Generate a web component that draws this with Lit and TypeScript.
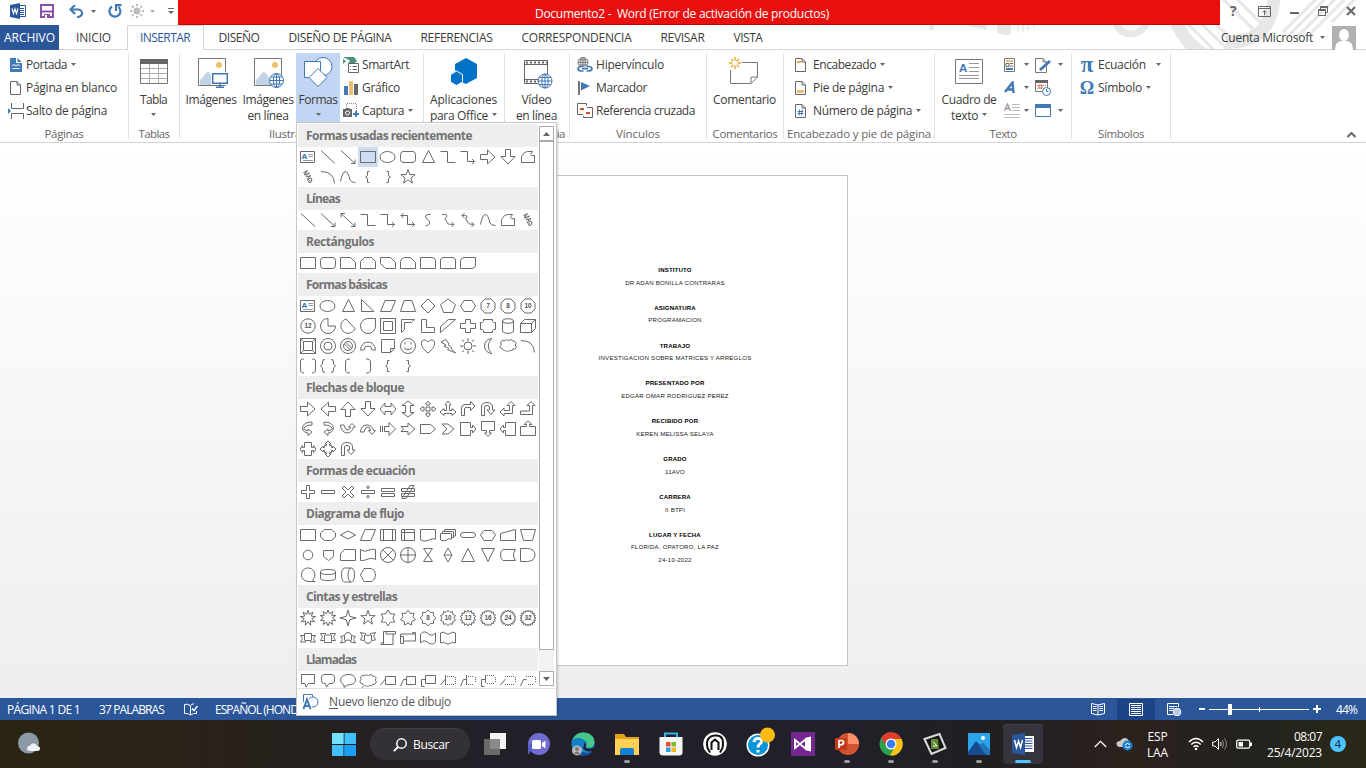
import { LitElement, html, css, svg, nothing } from "lit";
import { customElement } from "lit/decorators.js";

const FONT = '"Open Sans", "Noto Sans", sans-serif';
const ctx = document.createElement("canvas").getContext("2d")!;

/** A label whose tracking is computed so that it fills the given width. */
const tx = (text: string, width: number, size = 12, weight = 400) => {
  ctx.font = `${weight} ${size}px ${FONT}`;
  const gap = (width - ctx.measureText(text).width) / text.length;
  return html`<span class="tx" style="width:${width}px;font-size:${size}px;font-weight:${weight};letter-spacing:${gap.toFixed(3)}px">${text}</span>`;
};

const icon = (w: number, h: number, body: unknown) =>
  html`<svg class="ic" width=${w} height=${h} viewBox="0 0 ${w} ${h}" fill="none">${body}</svg>`;

const arrow = html`<svg class="arrow" width="5" height="3" viewBox="0 0 5 3"><path d="M0 0H5L2.5 3Z" fill="#666" /></svg>`;

const star = (n: number, R: number, r: number, cx = 10, cy = 10) => {
  let d = "";
  for (let i = 0; i < n * 2; i++) {
    const a = -Math.PI / 2 + (i * Math.PI) / n;
    const q = i % 2 ? r : R;
    d += (i ? "L" : "M") + (cx + q * Math.cos(a)).toFixed(2) + " " + (cy + q * Math.sin(a)).toFixed(2);
  }
  return d + "Z";
};
const circle = (r: number, cx = 10, cy = 10, ry = r) =>
  `M${cx - r} ${cy}a${r} ${ry} 0 1 0 ${2 * r} 0a${r} ${ry} 0 1 0 ${-2 * r} 0Z`;
const OCT = "M7 3H13L17 7V13L13 17H7L3 13V7Z";
const CLOUD = "M4.500 12.500A2 2 0 0 1 3.500 8.500A2.300 2.300 0 0 1 6.500 5A2.300 2.300 0 0 1 10.500 5A2.400 2.400 0 0 1 15 5.500A2 2 0 0 1 17 9A2.200 2.200 0 0 1 15 13A2.500 2.500 0 0 1 11.500 14.500A2.600 2.600 0 0 1 7.500 14.500A2.100 2.100 0 0 1 4.500 12.500Z";

type Shape = string | [string, string];
const S: Record<string, Shape> = {
  text: ["M2.500 4.500H16.500V15.500H2.500Z", "A"],
  line: "M3 3.500L17 16.500",
  lineA: "M3 3.500L17 16.500M17 12.500V16.500H13",
  lineAA: "M3 3.500L17 16.500M17 12.500V16.500H13M3 7.500V3.500H7",
  rect: "M2.500 4.500H17.500V15.500H2.500Z",
  ell: circle(7.5, 9.5, 10, 5.5),
  rrect: "M5 4.500H15Q17.500 5 17.500 7.500V12.500Q17.500 15 15 15.500H5Q2.500 15 2.500 12.500V7.500Q2.500 5 5 4.500Z",
  tri: "M10.500 3.500L16.500 15.500H4.500Z",
  elb: "M2.500 4.500H9.500V15.500H17.500",
  elbA: "M2.500 4.500H9.500V14.500H16.500M14 12L16.500 14.500L14 17",
  elbAA: "M3 5.500H9.500V14.500H16.500M14 12L16.500 14.500L14 17M5.500 3L3 5.500L5.500 8",
  aR: "M2.500 7.500H9.500V3L17 10L9.500 17V12.500H2.500Z",
  aL: "M17.500 7.500H10.500V3L3 10L10.500 17V12.500H17.500Z",
  aU: "M7.500 17.500V10.500H3L10 3L17 10.500H12.500V17.500Z",
  aD: "M7.500 2.500V9.500H3L10 17L17 9.500H12.500V2.500Z",
  free: "M3.500 15.500V9.500L6.500 5.500L9.500 4.500H14.500L12.500 7.500Q13 9.500 16.500 8.500V15.500Z",
  scrib: "M8 6Q6 7 5.500 5.500L9.500 3.500L6.500 8L11.500 6Q7 9.500 8.500 10L13 8.500Q8.500 11.500 9.500 13Q12 9.500 14 12Q13.500 16.500 11 15.500Q9.500 13.500 12 13",
  arc: "M3 4.500Q16 4.500 16.500 16.500",
  curve: "M2.500 14.500Q4.500 4.500 7.500 4.500Q10 4.500 12 13Q13 15.500 17.500 15.500",
  brL: "M11.500 4.500H9.500V8.500L7.500 10L9.500 11.500V15.500H11.500",
  brR: "M8.500 4.500H10.500V8.500L12.500 10L10.500 11.500V15.500H8.500",
  star5: star(5, 7.6, 3),
  cv: "M12.500 4.500H10Q7 5 7.500 7Q8 8.500 10 9.500Q12.500 11.500 11.500 14Q11 15.500 7.500 15.500",
  cvA: "M4 4.500Q9.500 4 9 6.500Q6.500 8 7 9.500Q9 10.500 9 12.500Q9 14.500 15.500 14.500M13.500 12L16 14.500L13.500 17",
  cvAA: "M4 5.500Q9.500 5 9 7Q7 8.500 8 10Q10 10.500 10 12.500Q10 14.500 15.500 14.500M13.500 12L16 14.500L13.500 17M6.500 3L4 5.500L6.500 8",
  snip1: "M2.500 4.500H12.500L17.500 9.500V15.500H2.500Z",
  snip2: "M6.500 4.500H13.500L17.500 8.500V15.500H2.500V8.500Z",
  snipD: "M2.500 4.500H12.500L17.500 9.500V15.500H7.500L2.500 10.500Z",
  snipR: "M6.500 4.500H12.500L17.500 9.500V15.500H2.500V8.500Q3 5 6.500 4.500Z",
  rnd1: "M2.500 4.500H14.500Q17 5 17.500 7.500V15.500H2.500Z",
  rnd2: "M5 4.500H15Q17.500 5 17.500 7V15.500H2.500V7Q2.500 5 5 4.500Z",
  rndD: "M6 4.500H17.500V12.500Q17 15 14 15.500H2.500V8Q3 5 6 4.500Z",
  rtri: "M3.500 3.500V15.500H16Z",
  para: "M7 4.500H17.500L13 15.500H2.500Z",
  trap: "M6 4.500H14L17.500 15.500H2.500Z",
  dia: "M10 3L17 10L10 17L3 10Z",
  pent: "M10 3L17.500 8.500L14.500 16.500H5.500L2.500 8.500Z",
  hex: "M6 4.500H14L17.500 10L14 15.500H6L2.500 10Z",
  o7: [OCT, "7"], o8: [OCT, "8"], o10: [OCT, "10"], o12: [circle(7.2), "12"],
  pie: "M10 2.500A7.500 7.500 0 1 0 17.500 10H10Z",
  chord: "M8 3L17 12.500A7.300 7.300 0 1 1 8 3Z",
  tear: "M10 2.500H17.500V10A7.500 7.500 0 1 1 10 2.500Z",
  frame: "M2.500 2.500H17.500V17.500H2.500ZM5.500 5.500H14.500V14.500H5.500Z",
  half: "M3.500 3.500H16.500L13.500 6.500H6.500V13.500L3.500 16.500Z",
  ell2: "M3.500 3.500H8.500V11.500H16.500V16.500H3.500Z",
  diag: "M2.500 10.500L10.500 3.500H17.500L2.500 16.500Z",
  plus: "M7.500 3.500H12.500V7.500H17.500V12.500H12.500V16.500H7.500V12.500H2.500V7.500H7.500Z",
  plaq: "M5.500 3.500H14.500V5.500L15.500 6.500H17.500V13.500H15.500L14.500 14.500V16.500H5.500V14.500L4.500 13.500H2.500V6.500H4.500L5.500 5.500Z",
  can: "M4.500 5C4.500 2 15.500 2 15.500 5V15C15.500 18 4.500 18 4.500 15ZM4.500 5C4.500 8 15.500 8 15.500 5",
  cube: "M2.500 7.500H13.500V16.500H2.500ZM2.500 7.500L6.500 3.500H17.500V12.500L13.500 16.500M13.500 7.500L17.500 3.500",
  bevel: "M2.500 2.500H17.500V17.500H2.500ZM5.500 5.500H14.500V14.500H5.500ZM2.500 2.500L5.500 5.500M17.500 2.500L14.500 5.500M2.500 17.500L5.500 14.500M17.500 17.500L14.500 14.500",
  donut: circle(7.5) + circle(4),
  no: circle(7.5) + circle(4.5) + "M6.500 8L12.500 14M8 6.500L14 12.500",
  barc: "M2.500 14A7.500 8 0 0 1 17.500 14H14A4 4 0 0 0 6 14Z",
  fold: "M3.500 3.500H16.500V12.500L12.500 16.500H3.500ZM12.500 16.500V12.500H16.500",
  smile: circle(7.5) + "M6 11.500Q10 16 14 11.500M7 6.500V8.500M13 6.500V8.500",
  heart: "M10 17C-2 8 5 0 10 6C15 0 22 8 10 17Z",
  bolt: "M3 6L8 3.500L11 8L10 8.500L14 12L13 12.500L17.500 17L9.500 13.500L11 12.500L6 10L8 9Z",
  sun: circle(4) + "M10 2V4.500L9 4M10 18V15.500L11 16M2 10H4.500L4 11M18 10H15.500L16 9M4 4L6 5.500M16 4L14 5.500M4 16L6 14.500M16 16L14 14.500",
  moon: "M14 2.500A7.500 7.500 0 1 0 14 17.500A9.500 9.500 0 0 1 14 2.500Z",
  cloud: CLOUD,
  bkts: "M6 3H4.500Q2.500 3.500 2.500 5V15Q3 17 6 17M14 3H15.500Q17.500 3.500 17.500 5V15Q17 17 14 17",
  brcs: "M7 3.500Q4.500 3 4.500 6V8L2.500 10L4.500 12V14Q4.500 17 7 16.500M13 3.500Q15.500 3 15.500 6V8L17.500 10L15.500 12V14Q15.500 17 13 16.500",
  bkL: "M12 3Q7.500 3 7.500 6V14Q7.500 17 12 17",
  bkR: "M8 3Q12.500 3 12.500 6V14Q12.500 17 8 17",
  aLR: "M2 10L7 4V7.500H13V4L18 10L13 16V12.500H7V16Z",
  aUD: "M10 2L16 6.500H12.500V13.500H16L10 18L4 13.500H7.500V6.500H4Z",
  a4: "M10 2L12.500 5H11V9H15V7.500L18 10L15 12.500V11H11V15H12.500L10 18L7.500 15H9V11H5V12.500L2 10L5 7.500V9H9V5H7.500Z",
  a3: "M10 2L13 6H11.500V11.500H14V9.500L18 13L14 16.500V14.500H6V16.500L2 13L6 9.500V11.500H8.500V6H7Z",
  bend: "M3.500 16.500V9Q3.500 5.500 7 5.500H12.500V2.500L17 7L12.500 11.500V8.500H8Q6.500 8.500 6.500 10V16.500Z",
  uturn: "M3.500 16.500V8Q3.500 3.500 9 3.500Q14.500 3.500 14.500 8V11H17L13 15.500L9 11H11.500V8Q11.500 6.500 9 6.500Q6.500 6.500 6.500 8V16.500Z",
  lu: "M2 13L6 9V11.500H11.500V6.500H9L13 2.500L17 6.500H14.500V14.500H6V17Z",
  bu: "M2.500 12H11.500V6.500H9L13 2.500L17 6.500H14.500V15.500H2.500Z",
  cR: "M14 3Q5 3 4.500 9Q5 13.500 10 14V16.500L14 13L10 10V12Q6 11 6 9.500Q7 6 14 6Z",
  cL: "M6 3Q15 3 15.500 9Q15 13.500 10 14V16.500L6 13L10 10V12Q14 11 14 9.500Q13 6 6 6Z",
  cU: "M2.500 6H6Q7 11 10 11Q12.500 10.500 12.500 8H10.500L14 4.500L17.500 8H15.500Q14 14 9 14Q3 13 2.500 6Z",
  cD: "M2.500 13H6Q7 8 10 8Q12.500 8.500 12.500 11.500H10.500L14 15.500L17.500 11.500H15.500Q14 6 9 6Q3 6 2.500 13Z",
  strp: "M2.500 7V13M4.500 7V13M6.500 7.500H11V3.500L17.500 10L11 16.500V12.500H6.500Z",
  notch: "M3 7.500H10V4L17 10L10 16V12.500H3L5.500 10Z",
  homep: "M2.500 5.500H12.500L17.500 10L12.500 14.500H2.500Z",
  chev: "M4 5H10L16 10L10 15H4L9 10Z",
  coR: "M2.500 3.500H12.500V8.500H14.500V6L18 10L14.500 14V11.500H12.500V16.500H2.500Z",
  coD: "M3.500 2.500H16.500V11.500H11.500V14H13.500L10 17.500L6.500 14H8.500V11.500H3.500Z",
  coL: "M17.500 3.500H7.500V8.500H5.500V6L2 10L5.500 14V11.500H7.500V16.500H17.500Z",
  coU: "M2.500 16.500H17.500V7.500H11.500V5.500H14L10 2L6 5.500H8.500V7.500H2.500Z",
  coLR: "M6.500 3.500H13.500V8.500H15.500V6.500L18 10L15.500 13.500V11.500H13.500V16.500H6.500V11.500H4.500V13.500L2 10L4.500 6.500V8.500H6.500Z",
  co4: "M10 2L13 5H11.500V6.500H13.500V8.500H15V7L18 10L15 13V11.500H13.500V13.500H11.500V15H13L10 18L7 15H8.500V13.500H6.500V11.500H5V13L2 10L5 7V8.500H6.500V6.500H8.500V5H7Z",
  eqP: "M8.500 3.500H11.500V8.500H16.500V11.500H11.500V16.500H8.500V11.500H3.500V8.500H8.500Z",
  eqM: "M3.500 8.500H16.500V11.500H3.500Z",
  eqX: "M6 4L10 8L14 4L16 6L12 10L16 14L14 16L10 12L6 16L4 14L8 10L4 6Z",
  eqD: "M3.500 8.500H16.500V11.500H3.500Z" + circle(1.2, 10, 5.2) + circle(1.2, 10, 14.8),
  eqE: "M3.500 6.500H16.500V9.500H3.500ZM3.500 11.500H16.500V14.500H3.500Z",
  eqN: "M3.500 6.500H16.500V9.500H3.500ZM3.500 11.500H16.500V14.500H3.500ZM4 16.500L12 3.500H16L8 16.500Z",
  alt: "M6.500 4.500H13.500L17.500 8V12L13.500 15.500H6.500L2.500 12V8Z",
  dec: "M10 6L17.500 10L10 14L2.500 10Z",
  pred: "M2.500 4.500H17.500V15.500H2.500ZM5.500 4.500V15.500M14.500 4.500V15.500",
  intl: "M3.500 4.500H16.500V15.500H3.500ZM6.500 4.500V15.500M3.500 7.500H16.500",
  docu: "M2.500 4.500H17.500V14Q14 13 10 15.500Q6 17 2.500 15Z",
  mdoc: "M2.500 8.500H13.500V14Q10 13 8 15.500Q5 16.500 2.500 15ZM4.500 8V6.500H15.500V12.500H14M6.500 6V4.500H17.500V11H16",
  term: "M5 7.500H15Q17.500 8 17.500 10T15 12.500H5Q2.500 12 2.500 10T5 7.500Z",
  prep: "M6 5.500H14L17.500 10L14 15.500H6L2.500 10Z",
  minp: "M2.500 8.500L17.500 4.500V15.500H2.500Z",
  mop: "M2.500 4.500H17.500L14.500 15.500H5.500Z",
  conn: circle(4.8),
  offp: "M5.500 5.500H15.500V11.500L10.500 15.500L5.500 11.500Z",
  card: "M6.500 4.500H17.500V15.500H2.500V8.500Z",
  tape: "M2.500 4.500Q6 7.500 10 5.500T17.500 4.500V14.500Q14 12 10 14T2.500 15.500Z",
  sumj: circle(7.5) + "M4.700 4.700L15.300 15.300M15.300 4.700L4.700 15.300",
  or: circle(7.5) + "M10 2.500V17.500M2.500 10H17.500",
  coll: "M5.500 3.500H14.500L5.500 16.500H14.500Z",
  sort: "M10 3L14 10L10 17L6 10ZM6 10H14",
  extr: "M10 3.500L16.500 16.500H3.500Z",
  merg: "M3.500 3.500H16.500L10 16.500Z",
  stor: "M5 4.500H17.500Q13.500 10 17.500 15.500H5Q2.500 14 2.500 10T5 4.500Z",
  dely: "M2.500 3.500H9.500Q17 4 17 10T9.500 16.500H2.500Z",
  seqa: "M17.500 16.500H10A6.800 6.800 0 1 1 15 14.500V16.500",
  disk: "M2.500 7Q2.500 4.500 10 4.500T17.500 7V13Q17.500 15.500 10 15.500T2.500 13ZM2.500 7Q2.500 9.500 10 9.500T17.500 7",
  dirc: "M6.500 3H13.500Q16.500 4 16.500 10T13.500 17H6.500Q3.500 16 3.500 10T6.500 3ZM13 3Q10 4 10 10T13 17",
  disp: "M2.500 10L6 3.500H13.500Q17.500 5 17.500 10T13.500 16.500H6Z",
  exp1: star(9, 7.8, 3.8), exp2: star(10, 8, 4.6), s4: star(4, 8, 2.4), s6: star(6, 8, 4.8), s7: star(7, 7.8, 5),
  s8: [star(8, 7.8, 6), "8"], s10: [star(10, 7.8, 6), "10"], s12: [star(14, 8, 6), "12"], s16: [star(16, 8, 6.2), "16"], s24: [star(18, 8, 6.2), "24"], s32: [star(20, 8, 6.2), "32"],
  rib1: "M2.500 7.500H6.500V5.500H13.500V7.500H17.500L15.500 10.500L17.500 14H12.500V12.500H7.500V14H2.500L4.500 10.500ZM6.500 7V12.500M13.500 7V12.500",
  rib2: "M2.500 5.500H7.500V7H12.500V5.500H17.500L15.500 9L17.500 12.500H13.500V14.500H6.500V12.500H2.500L4.500 9ZM6.500 12V7M13.500 12V7",
  rib3: "M2.500 8.500L6.500 7.500Q7 4.500 10 4.500T13.500 7.500L17.500 8.500L15.500 11.500L17.500 15L12.500 14V12.500Q10 11.500 7.500 12.500V14L2.500 15L4.500 11.500ZM6.500 7.500V12.500M13.500 7.500V12.500",
  rib4: "M2.500 4.500L7.500 5.500V7Q10 8 12.500 7V5.500L17.500 4.500L15.500 8L17.500 12L13.500 12.500Q13 15.500 10 15.500T6.500 12.500L2.500 12L4.500 8ZM6.500 12V7M13.500 12V7",
  scrV: "M5.500 14.500V3.500H17.500V6H15V16.500H3Q2.500 14 5.500 14.500V16.500M15 6H8V3.500",
  scrH: "M2.500 6H14.500V4.500H17.500V13H5.500V15.500H2.500ZM5.500 8.500V13M5.500 8.500H2.500M14.500 6Q17 7 17.500 5",
  wav: "M2.500 6Q6 2 10 5.500T17.500 5V14Q14 18 10 14.500T2.500 15Z",
  dwav: "M2.500 5Q6 3 8 5.500Q10 7 12 5.500Q14 3 17.500 5V15Q14 13 12 15.500Q10 17 8 15.500Q6 13 2.500 15Z",
  c1: "M3.500 3.500H16.500V12.500H10.500L8 16L7 12.500H3.500Z",
  c2: "M6 3.500H14Q16.500 4 16.500 6V10Q16.500 12 14 12.500H11L8.500 16L7.500 12.500H6Q3.500 12 3.500 10V6Q3.500 4 6 3.500Z",
  c3: "M6 14Q2.500 12 2.500 9Q3 4 10 3.500T17.500 9Q17 14 9.500 14L6 16.500Z",
  c4: CLOUD + "M5 15.500L4 17",
  c5: "M7.500 5.500H17.500V13.500H7.500ZM7.500 8L2.500 14",
  c6: "M8.500 5.500H17.500V13.500H8.500ZM8.500 8.500H5.500L2.500 15",
  c7: "M7.500 4.500H17.500V12.500H7.500ZM7.500 8.500H3.500V15.500H6.500",
  c8: "M7.500 4L7.500 14M7.500 8L2.500 14M9 5.500H10M11 5.500H12M13 5.500H14M15 5.500H16M17.500 6V7M17.500 8V9M17.500 10V11M17.500 12V13M9 13.500H10M11 13.500H12M13 13.500H14M15 13.500H16",
  c9: "M8.500 4L8.500 14M8.500 8.500H5.500L2.500 15M10 5.500H11M12 5.500H13M14 5.500H15M17.500 6V7M17.500 8V9M17.500 10V11M10 13.500H11M12 13.500H13M14 13.500H15",
  c10: "M7.500 4L7.500 12M7.500 8.500H3.500V15.500H6.500M9 4.500H10M11 4.500H12M13 4.500H14M15 4.500H16M17.500 6V7M17.500 8V9M17.500 10V11M9 12.500H10M11 12.500H12M13 12.500H14M15 12.500H16",
  c11: "M7.500 8L2.500 14M7 5.500H8M9 5.500H10M11 5.500H12M13 5.500H14M15 5.500H16M17.500 6V7M17.500 8V9M17.500 10V11M7 13.500H8M9 13.500H10M11 13.500H12M13 13.500H14M15 13.500H16",
  c12: "M8.500 8.500H5.500L2.500 15M8 5.500H9M10 5.500H11M12 5.500H13M14 5.500H15M17.500 6V7M17.500 8V9M17.500 10V11M10 13.500H11M12 13.500H13M14 13.500H15",
};

const SECTIONS: [string, number, string][] = [
  ["Formas usadas recientemente", 166, "text line lineA rect ell rrect tri elb elbA aR aD free scrib arc curve brL brR star5"],
  ["Líneas", 34, "line lineA lineAA elb elbA elbAA cv cvA cvAA curve free scrib"],
  ["Rectángulos", 68, "rect rrect snip1 snip2 snipD snipR rnd1 rnd2 rndD"],
  ["Formas básicas", 81, "text ell tri rtri para trap dia pent hex o7 o8 o10 o12 pie chord tear frame half ell2 diag plus plaq can cube bevel donut no barc fold smile heart bolt sun moon cloud arc bkts brcs bkL bkR brL brR"],
  ["Flechas de bloque", 98, "aR aL aU aD aLR aUD a4 a3 bend uturn lu bu cR cL cU cD strp notch homep chev coR coD coL coU coLR co4 uturn"],
  ["Formas de ecuación", 109, "eqP eqM eqX eqD eqE eqN"],
  ["Diagrama de flujo", 98, "rect alt dec para pred intl docu mdoc term prep minp mop conn offp card tape sumj or coll sort extr merg stor dely seqa disk dirc disp"],
  ["Cintas y estrellas", 91, "exp1 exp2 s4 star5 s6 s7 s8 s10 s12 s16 s24 s32 rib1 rib2 rib3 rib4 scrV scrH wav dwav"],
  ["Llamadas", 50, "c1 c2 c3 c4 c5 c6 c7 c8 c9 c10 c11 c12"],
];

@customElement("shapes-menu")
export class ShapesMenu extends LitElement {
  static styles = css`
    :host { display: flex; flex-direction: column; box-sizing: border-box; width: 261px; height: 594px; border: 1px solid #c6c6c6; padding: 1px; background: #fff; font-family: "Open Sans", "Noto Sans", sans-serif; color: #6a6a6a; box-shadow: 1px 1px 2px rgba(0,0,0,.18); }
    .tx { display: inline-block; white-space: pre; }
    .body { display: flex; height: 564px; }
    .list { width: 240px; overflow: hidden; }
    .head { height: 23px; line-height: 24px; background: #eee; padding-left: 8px; color: #737373; }
    .grid { display: grid; grid-template-columns: repeat(12, 20px); grid-auto-rows: 20px; }
    .cell { display: block; width: 20px; height: 20px; stroke: #6a6a6a; stroke-width: 1; fill: none; }
    .sel { background: #cfddf3; }
    .num { font: 700 6.5px "Liberation Sans", sans-serif; fill: #555; stroke: none; }
    .ta { font: 700 8px "Liberation Sans", sans-serif; fill: #2f6fb5; stroke: none; }
    .bar { display: flex; flex-direction: column; width: 15px; margin: 2px 0 2px 1px; background: #f3f3f3; }
    .btn { display: flex; align-items: center; justify-content: center; box-sizing: border-box; height: 15px; border: 1px solid #ababab; background: #fff; flex: none; }
    .thumb { box-sizing: border-box; height: 509px; border: 1px solid #ababab; background: #fff; }
    .rest { flex: 1; }
    .foot { display: flex; align-items: center; height: 25px; border-top: 1px solid #e1e1e1; padding-left: 4px; gap: 10px; font-size: 12px; color: #555; }
    .lbl { display: flex; }
    .u .tx { text-decoration: underline; text-underline-offset: 2px; }
  `;
  shape(name: string, selected: boolean) {
    const s = S[name];
    const [d, t] = typeof s === "string" ? [s, ""] : s;
    return html`<svg class="cell ${selected ? "sel" : ""}" viewBox="0 0 20 20"><path d=${d} />${
      t === "A"
        ? svg`<text class="ta" x="3.500" y="12">A</text><path d="M10.500 7.500H15M10.500 9.500H15M5 13.500H15" stroke="#999"/>`
        : t ? svg`<text class="num" x="10" y="12.400" text-anchor="middle">${t}</text>` : nothing
    }</svg>`;
  }
  render() {
    return html`
      <div class="body">
        <div class="list">
          ${SECTIONS.map(([title, w, names], i) => html`
            <div class="head">${tx(title, w, 12, 700)}</div>
            <div class="grid">${names.split(" ").map((n, k) => this.shape(n, i === 0 && k === 3))}</div>`)}
        </div>
        <div class="bar">
          <div class="btn"><svg width="7" height="4"><path d="M0 4L3.500 0L7 4Z" fill="#666" /></svg></div>
          <div class="thumb"></div>
          <div class="rest"></div>
          <div class="btn"><svg width="7" height="4"><path d="M0 0H7L3.500 4Z" fill="#666" /></svg></div>
        </div>
      </div>
      <div class="foot">
        ${icon(17, 17, svg`<path d="M1.500 9V1.500H10.500V4" stroke="#4177b3"/><circle cx="11" cy="9" r="5" stroke="#4177b3"/><path d="M1.500 16L5 6.500L8.500 16M3 13H7" stroke="#fff" stroke-width="4"/><path d="M1.500 16L5 6.500L8.500 16M3 13H7" stroke="#4177b3" stroke-width="2"/>`)}
        <span class="lbl"><span class="u">${tx("N", 9)}</span>${tx("uevo lienzo de dibujo", 113)}</span>
      </div>`;
  }
}

const BLUE = "#4079b5";
const G = "#666";
const pageOutline = svg`<path d="M.5 .5H7L10.500 4V13.500H.5ZM7 .5V4H10.500" stroke="#666" fill="#fff"/>`;
const globe = (x: number, y: number, r: number, c: string) => svg`<g transform="translate(${x} ${y})" stroke=${c}><circle r=${r} fill="#fff"/><ellipse rx=${r * 0.45} ry=${r}/><path d="M${-r} 0H${r}M0 ${-r}V${r}M${-r * 0.85} ${-r * 0.5}H${r * 0.85}M${-r * 0.85} ${r * 0.5}H${r * 0.85}"/></g>`;
const picture = svg`<path d="M.5 .5H27.500V27.500H.5Z" stroke="#777" fill="#fff"/><circle cx="21" cy="7" r="3" fill="#edc06c"/><path d="M2 27V22L10 13L21 27Z" fill="#c3d4e6"/>`;
const I = {
  word: icon(17, 16, svg`<path d="M9.500 2.500H15.500V13.500H9.500Z" fill="#fff" stroke="#2b579a"/><path d="M10 5.500H14M10 7.500H14M10 9.500H14M10 11.500H14" stroke="#2b579a"/><path d="M0 2L10 0V16L0 14Z" fill="#2b579a"/><path d="M2 5.500L3.500 10.500L5 6L6.500 10.500L8 5.500" stroke="#fff" stroke-width="1.200"/>`),
  save: icon(14, 14, svg`<path d="M1 1H13V13H1Z" stroke="#8a50a8" stroke-width="2"/><path d="M2 7.500H12" stroke="#8a50a8" stroke-width="2"/><path d="M4 10H10V14H4Z" fill="#8a50a8"/><path d="M5 11H7V14H5Z" fill="#fff"/>`),
  undo: icon(15, 13, svg`<path d="M2 4.500H9Q13.500 5 13 9Q12 12 8 12" stroke="${BLUE}" stroke-width="2.200"/><path d="M6 0L1.500 4.500L6 9" stroke="${BLUE}" stroke-width="2.200"/>`),
  redo: icon(14, 14, svg`<path d="M4 2.500A5.500 5.500 0 1 0 10.500 3" stroke="${BLUE}" stroke-width="2.200"/><path d="M8 7V1.200H13.500" stroke="${BLUE}" stroke-width="2.200"/>`),
  sunG: icon(14, 14, svg`<circle cx="7" cy="7" r="3.500" fill="#bbb"/><path d="M7 0V2M7 12V14M0 7H2M12 7H14M2 2L3.500 3.500M12 2L10.500 3.500M2 12L3.500 10.500M12 12L10.500 10.500" stroke="#bbb" stroke-width="2"/>`),
  qat: icon(6, 8, svg`<path d="M0 1.500H6" stroke="#666"/><path d="M0 4H6L3 7Z" fill="#666"/>`),
  cover: icon(12, 14, svg`<path d="M0 0H6V5H12V14H0Z" fill="${BLUE}"/><path d="M7.500 0L11.500 4H7.500Z" fill="${BLUE}"/><path d="M2 8L4 6.500L6 8L8 6.500L10 8M2.500 10.500H9.500" stroke="#fff"/>`),
  blank: icon(12, 14, pageOutline),
  brk: icon(16, 16, svg`<path d="M3.500 0V5.500H15.500V0M3.500 16V10.500H15.500V16" stroke="${G}"/><path d="M0 5L3 8L0 11Z" fill="${BLUE}"/>`),
  table: icon(28, 26, svg`<path d="M.5 .5H27.500V24.500H.5Z" stroke="#777"/><path d="M0 0H28V5H0Z" fill="#666"/><path d="M1 9.500H27M1 14.500H27M1 19.500H27M9.500 5V24M18.500 5V24" stroke="#aaa"/>`),
  img: icon(30, 30, svg`${picture}<path d="M13 14H31V27H13Z" fill="#fff"/><path d="M14.700 15.700H29.300V25.300H14.700Z" fill="#fff" stroke="${BLUE}" stroke-width="1.500"/><path d="M22 26V29M18 29.200H26" stroke="${BLUE}" stroke-width="1.500"/>`),
  imgw: icon(30, 30, svg`${picture}${globe(22.5, 22.5, 7, BLUE)}`),
  shapes: icon(30, 31, svg`<circle cx="20" cy="9.500" r="9" fill="#fff" stroke="${BLUE}"/><path d="M1.500 4.500H17.500V20.500H1.500Z" fill="#fff" stroke="${BLUE}"/><path d="M15 11.500L24 20.500L15 29.500L6 20.500Z" fill="#fff" stroke="${BLUE}"/>`),
  smart: icon(17, 16, svg`<path d="M0 0H11L14 4L11 7H5L7 3.500ZM0 2L3 4L0 7Z" fill="#4a9277"/><path d="M5.500 6.500H15.500V15.500H5.500Z" fill="#fff" stroke="#666"/><path d="M7 9.500H8M9.500 9.500H14M7 12.500H8M9.500 12.500H14" stroke="#666"/>`),
  chart: icon(15, 14, svg`<path d="M0 5H4V14H0Z" fill="${BLUE}"/><path d="M5 0H9V14H5Z" fill="#e8bf76"/><path d="M10 3H14V14H10Z" fill="#666"/>`),
  shot: icon(17, 15, svg`<path d="M3.500 4V.5H13.500V8" stroke="#888" stroke-dasharray="1 1"/><path d="M0 6H2L3 5H6L7 6H9V14H0Z" fill="#666"/><circle cx="4.500" cy="10" r="2" stroke="#fff"/><path d="M13 8V14M10 11H16" stroke="${BLUE}" stroke-width="2"/>`),
  apps: icon(28, 28, svg`<path d="M16 0L27 6V20L16 26L9 23V16L5 12V6Z" fill="#0072c6"/><path d="M6.500 13L12.500 16.500V24L6.500 27.500L.5 24V16.500Z" fill="#0072c6" stroke="#fff"/>`),
  video: icon(29, 29, svg`<path d="M.5 .5H23.500V23.500H.5Z" fill="#fff" stroke="#666"/><path d="M.5 4.500H23.500M.5 19.500H23.500" stroke="#666"/><path d="M2 2.500H23M2 21.500H23" stroke="#666" stroke-width="2" stroke-dasharray="2 2"/>${globe(21, 21, 7, BLUE)}`),
  link: icon(16, 16, svg`${globe(6, 5.5, 5, "#777")}<path d="M3 9.500H13V16H3Z" fill="#fff"/><path d="M6.500 9.500H4Q1 10 1 11.700T4 14H6.500M9.500 9.500H12Q15 10 15 11.700T12 14H9.500M5 11.700H11" stroke="${BLUE}" stroke-width="1.700"/>`),
  flag: icon(14, 14, svg`<path d="M1 0V14" stroke="#777" stroke-width="2"/><path d="M3 1L12 5L3 9.500Z" fill="${BLUE}"/>`),
  xref: icon(16, 16, svg`<path d="M6 11.500H.5V.5H9.500V3M10 4.500H15.500V14.500H6.500V13" stroke="#666"/><path d="M3 6H7M9 10H13" stroke="#d4502c" stroke-width="2"/>`),
  comment: icon(31, 27, svg`<path d="M1.500 13V26.500H22L28.500 20V5.500H13M22 26.500V20H28.500" stroke="#777"/><path d="M6 0V12M0 6H12M2 2L10 10M10 2L2 10" stroke="#edc06c" stroke-width="2"/><circle cx="6" cy="6" r="2.500" fill="#fff"/>`),
  hdr: icon(12, 14, svg`${pageOutline}<path d="M2 3H6V5H2Z" fill="#e8a84a"/>`),
  ftr: icon(12, 14, svg`${pageOutline}<path d="M2 9H9V12H2Z" fill="#e8bf76"/>`),
  num: icon(12, 14, svg`${pageOutline}<path d="M4.500 5.500L4 11.500M7 5.500L6.500 11.500M2.500 7.500H8.500M2.500 9.500H8.500" stroke="${BLUE}"/>`),
  tbox: icon(28, 26, svg`<path d="M.5 .5H27.500V24.500H.5Z" stroke="#777"/><text x="4" y="13" font-family="Liberation Sans" font-weight="700" font-size="11.500" fill="${BLUE}">A</text><path d="M14 4.500H24M14 8.500H24M14 12.500H24M4 16.500H24M4 19.500H24" stroke="#999"/>`),
  quick: icon(11, 14, svg`<path d="M.5 .5H10.500V13.500H.5Z" stroke="#777"/><path d="M2 3H9" stroke="#e8bf76" stroke-width="2"/><path d="M2 5.500H5V8.500H2ZM6 5.500H9M6 8H9" stroke="#666"/><path d="M2 11H9" stroke="${BLUE}" stroke-width="2"/>`),
  wart: icon(12, 13, svg`<path d="M1 11L8.500 1.500L9.500 12M3.500 8.500H9" stroke="${BLUE}" stroke-width="2.400"/>`),
  drop: icon(16, 16, svg`<path d="M.5 8L3.500 1L6.500 8M1.500 5.500H5.500" stroke="#999" stroke-width="1.300"/><path d="M8 1.500H16M8 4.500H16M8 7.500H16M0 11.500H16M0 14.500H16" stroke="#bbb"/>`),
  sign: icon(16, 16, svg`<path d="M.5 1.500H8L11.500 5V15.500H.5ZM8 1.500V5H11.500" stroke="#777"/><path d="M5 13L15 4" stroke="${BLUE}" stroke-width="3"/>`),
  date: icon(16, 16, svg`<path d="M.5 .5H12.500V11.500H.5Z" stroke="#777"/><path d="M0 0H13V3H0Z" fill="#666"/><path d="M2 5.500H11M2 8.500H7" stroke="#888" stroke-dasharray="1 1"/><path d="M4 5H7V8H4Z" stroke="#e06a2a"/><circle cx="11.500" cy="11.500" r="4" fill="#fff" stroke="${BLUE}"/><path d="M11.500 9V11.500H13.500" stroke="${BLUE}"/>`),
  obj: icon(16, 13, svg`<path d="M.5 .5H15.500V12.500H.5Z" stroke="${BLUE}"/><path d="M0 0H16V4H0Z" fill="${BLUE}"/>`),
};

const GLYPH = {
  pi: html`<span class="sym pi">π</span>`,
  omega: html`<span class="sym">Ω</span>`,
};

const item = (ic: unknown, text: string, w: number, arr = false) =>
  html`<div class="item"><span class="slot">${ic}</span>${tx(text, w)}${arr ? arrow : nothing}</div>`;
const big = (cls: string, ic: unknown, l1: unknown, l2: unknown) =>
  html`<div class="big ${cls}"><span class="pic">${ic}</span><span class="l">${l1}</span><span class="l">${l2}</span></div>`;
const group = (cls: string, body: unknown, label: string, w: number) =>
  html`<section class="group ${cls}"><div class="gbody">${body}</div><div class="glabel">${tx(label, w, 11.5)}</div></section>`;

const DOC: [string, string[]][] = [
  ["INSTITUTO", ["DR ADAN BONILLA CONTRARAS"]],
  ["ASIGNATURA", ["PROGRAMACION"]],
  ["TRABAJO", ["INVESTIGACION SOBRE MATRICES Y ARREGLOS"]],
  ["PRESENTADO POR", ["EDGAR OMAR RODRIGUEZ PEREZ"]],
  ["RECIBIDO POR", ["KEREN MELISSA SELAYA"]],
  ["GRADO", ["11AVO"]],
  ["CARRERA", ["II BTPI"]],
  ["LUGAR Y FECHA", ["FLORIDA, OPATORO, LA PAZ", "24-10-2022"]],
];

const tb = (body: unknown) => icon(24, 24, body);
const APPS: [unknown, string][] = [
  [tb(svg`<path d="M7 1H23V17H7Z" fill="#f4f4f4"/><path d="M1 7H17V23H1Z" fill="#777" opacity=".85"/>`), ""],
  [tb(svg`<circle cx="12" cy="12" r="11" fill="#6f6bd0"/><path d="M1 23V12H8Z" fill="#5a5fc7"/><rect x="5" y="8" width="9" height="9" rx="1.500" fill="#fff"/><path d="M15 11L18.500 8.500V16.500L15 14Z" fill="#fff"/>`), ""],
  [tb(svg`<circle cx="12" cy="12" r="11.500" fill="#1b87d8"/><path d="M1 9Q4 .5 12 .5Q23.500 1 23.500 11Q22 17 15 15Q18 9 11 7Q4 6 1 9Z" fill="#45c98a"/><path d="M1 9Q6 3 13 8Q15 11 14 14Q8 12 9 20Q2 19 1 9Z" fill="#1480c8"/><path d="M9 13Q8 23 20 20Q15 25 8 22Z" fill="#0c4f9e"/><path d="M14 10Q16 13 14.500 15.500Q18 18 23 15L22 19Q15 21 12 16Z" fill="#222028"/><circle cx="6" cy="18.500" r="5" fill="#bbb"/><circle cx="6" cy="17" r="2" fill="#777"/><path d="M2.500 22Q6 17 9.500 22Z" fill="#777"/>`), ""],
  [tb(svg`<path d="M0 2H9L11 5H24V22H0Z" fill="#e2a21c"/><path d="M0 7H24V23H0Z" fill="#ffd257"/><path d="M5 23V18Q5 16 7 16H17Q19 16 19 18V23Z" fill="#1380cf"/>`), "dot"],
  [tb(svg`<path d="M6 6V1.500H18V6" stroke="#2eb6ea" stroke-width="2"/><path d="M.5 5H23.500V21Q23 23.500 20 23.500H4Q1 23.500 .5 21Z" fill="#f5f5f5"/><path d="M7 10H11.500V14.500H7Z" fill="#e8502b"/><path d="M12.500 10H17V14.500H12.500Z" fill="#7cb82f"/><path d="M7 15.500H11.500V20H7Z" fill="#2a9fe0"/><path d="M12.500 15.500H17V20H12.500Z" fill="#f7b51c"/>`), ""],
  [tb(svg`<circle cx="12" cy="12" r="11.800" fill="#fff"/><path d="M7 20.500L4.500 16Q2 4.500 12 3.500T19.500 16L17 20.500M8.500 18V10.500L12 7.500L15.500 10.500V18" stroke="#111" stroke-width="2"/>`), ""],
  [tb(svg`<circle cx="11" cy="13" r="10.800" fill="#0a95d8" stroke="#fff" stroke-width="1.500"/><path d="M7 10Q7.500 6 11.500 6.500Q16 7 14 11Q11 13 11 15.500M11 18V20.500" stroke="#fff" stroke-width="3"/><circle cx="20.500" cy="3" r="7.500" fill="#ffb915"/>`), "over"],
  [tb(svg`<path d="M0 0H24V24H0Z" fill="#74278f"/><path d="M4 8L14.500 16.500V7.500L4 16Z" stroke="#fff" stroke-width="2"/><path d="M14 6L20 4.500V19.500L14 18Z" fill="#fff"/><path d="M14 9.500L10.500 12L14 14.500Z" fill="#74278f"/>`), ""],
  [tb(svg`<circle cx="13" cy="12" r="11" fill="#d35230"/><path d="M13 1A11 11 0 0 1 24 12H13Z" fill="#ff8f6b"/><path d="M0 6H12V18H0Z" fill="#c13b1b"/><path d="M4 16V8.500H6.500Q9 9 8.500 11T4 13" stroke="#fff" stroke-width="1.700"/>`), "dot"],
  [tb(svg`<circle cx="12" cy="12" r="11.500" fill="#2ba14b"/><path d="M2 6A11.500 11.500 0 0 1 22.500 7H12L7 13Z" fill="#e33b2e"/><path d="M22.500 7A11.500 11.500 0 0 1 11 23.500L17 13L15 7Z" fill="#fbc116"/><circle cx="12" cy="12" r="5.500" fill="#fff"/><circle cx="12" cy="12" r="4.300" fill="#3b7ded"/>`), "dot"],
  [tb(svg`<path d="M1.500 7L16.500 2L22.500 16L8.500 22Z" fill="#171717" stroke="#ddd" stroke-width="2"/><path d="M8 7H15L16 17H8Z" fill="#5c8a2c"/><path d="M10 9.500L14 14M10 14H14" stroke="#fff"/>`), "dot"],
  [tb(svg`<path d="M1 1H23V23H1Z" fill="#2ba5ea"/><path d="M1 20L9 9L23 23H1Z" fill="#174a8c"/><path d="M12 14L16 10.500L23 18V23H19Z" fill="#2271b9"/><circle cx="16" cy="6" r="2" fill="#fff"/>`), "dot"],
  [tb(svg`<path d="M12 4H23V20H12Z" fill="#fff"/><path d="M14 6.500H21.500M14 9H21.500M14 11.500H21.500M14 14H21.500M14 16.500H21.500" stroke="#2b579a"/><path d="M1 3L14 1V23L1 21Z" fill="#2b579a"/><path d="M3.500 8L5.500 15.500L7.500 9L9.500 15.500L11.500 8" stroke="#fff" stroke-width="1.500"/>`), "active"],
];

@customElement("app-root")
export class AppRoot extends LitElement {
  static styles = css`
    :host { display: flex; flex-direction: column; position: relative; width: 1366px; height: 768px; overflow: hidden; font-family: "Open Sans", "Noto Sans", sans-serif; font-size: 12px; color: #3b3b3b; background: #fff; }
    * { box-sizing: border-box; }
    .tx { display: inline-block; white-space: pre; flex: none; }
    .ic, .arrow { display: block; flex: none; }
    .top { position: relative; height: 50px; flex: none; border-bottom: 1px solid #d4d4d4; }
    .decor { position: absolute; left: 0; top: 0; }
    .title { position: relative; display: flex; height: 25px; }
    .quick { display: flex; align-items: center; width: 178px; padding: 0 0 3px 10px; flex: none; }
    .q1 { margin-left: 13px; } .q2 { margin-left: 15px; } .q3 { margin-left: 7px; } .q4 { margin-left: 12px; } .q5 { margin-left: 8px; } .q6 { margin-left: 6px; } .q7 { margin-left: 13px; }
    .dim { opacity: .5; }
    .red { display: flex; align-items: center; justify-content: center; width: 1042px; padding-right: 34px; background: #ea0f0f; color: #fff; border-bottom: 1px solid #c70000; padding-top: 2px; }
    .ctl { display: flex; align-items: center; justify-content: space-between; flex: 1; padding: 0 10px 3px 10px; }
    .help { font-weight: 700; font-size: 14px; color: #666; width: 10px; line-height: 20px; }
    .tabs { position: relative; display: flex; height: 25px; line-height: 26px; }
    .tab { padding: 0 14.5px; }
    .file { width: 59px; padding: 0 4px; background: #2b579a; color: #fff; }
    .first { width: 68px; padding: 0 0 0 17px; }
    .on { width: 77px; padding: 0 0 0 12px; border: 1px solid #d4d4d4; border-bottom: 0; background: #fff; color: #2b579a; line-height: 24px; }
    .acct { display: flex; align-items: center; margin-left: auto; padding-right: 10px; line-height: 24px; }
    .acct .arrow { margin: 0 7px; }
    .ribbon { display: flex; height: 93px; flex: none; padding-top: 3px; border-bottom: 1px solid #d2d2d2; background: #fff; }
    .group { display: flex; flex-direction: column; height: 86px; border-right: 1px solid #e1e1e1; flex: none; }
    .gbody { display: flex; height: 70px; }
    .glabel { display: flex; justify-content: center; color: #666; line-height: 22px; height: 16px; }
    .item { display: flex; align-items: center; height: 23px; }
    .item .arrow { margin-left: 4px; }
    .slot { display: flex; align-items: center; justify-content: center; width: 18px; }
    .big { display: flex; flex-direction: column; align-items: center; height: 70px; }
    .pic { display: flex; align-items: center; justify-content: center; height: 38px; }
    .l { display: flex; align-items: center; justify-content: center; gap: 4px; height: 16px; }
    .l .arrow { margin-bottom: 2px; }
    .pg { width: 129px; } .pg .gbody { padding-left: 7px; } .pg .slot { margin-right: 1px; }
    .tb { width: 51px; } .tb .big { width: 49px; }
    .il { width: 244px; }
    .b1 { width: 62px; } .b2 { width: 52px; margin-right: 2px; } .b3 { width: 44px; background: #c2d5f2; }
    .b1 .pic, .b2 .pic { padding-top: 2px; }
    .b1 .pic { padding-left: 3px; } .b2 .pic { padding-left: 2px; }
    .il .col { padding-left: 2px; } .il .slot { margin-right: 2px; }
    .ap { width: 81px; } .ap .big { width: 79px; }
    .mm { width: 65px; } .mm .big { width: 63px; } .mm .pic { padding: 4px 0 0 4px; }
    .vi { width: 137px; } .vi .gbody { padding-left: 6px; } .vi .slot { margin-right: 2px; }
    .co { width: 77px; } .co .big { width: 75px; } .co .pic { padding-bottom: 4px; }
    .en { width: 151px; } .en .gbody { padding-left: 8px; } .en .slot { margin-right: 3px; }
    .te { width: 137px; } .te .big { width: 68px; }
    .tc { width: 31px; } .te .tc .slot { width: 17px; justify-content: flex-start; padding-left: 1px; }
    .te .wide .slot { width: 20px; }
    .sy { width: 99px; } .sy .gbody { padding-left: 6px; } .sy .slot { margin-right: 2px; }
    .eq .arrow { margin-left: 10px; }
    .sym { font: 700 18px/20px "Liberation Serif", serif; color: #4079b5; }
    .pi { font-size: 23px; line-height: 12px; }
    .fold { margin: 79px 10px 0 auto; }
    .canvas { display: flex; height: 555px; flex: none; padding: 32px 0 0 502px; background: linear-gradient(#fff, #eee); }
    .page { width: 346px; height: 491px; padding-top: 88px; border: 1px solid #c6c6c6; background: #fff; text-align: center; font: 6.1px/12.61px "Liberation Sans", sans-serif; letter-spacing: .22px; color: #222; }
    .h { font-weight: 700; color: #000; letter-spacing: .15px; }
    .blk { margin: 0 0 12.61px; }
    .status { display: flex; align-items: center; height: 22px; flex: none; padding-left: 7px; background: #2b579a; color: #fff; }
    .s1 { margin-left: 19px; } .s2 { margin: 0 17px 0 20px; }
    .views { display: flex; align-items: center; margin-left: auto; height: 22px; }
    .v { display: flex; align-items: center; justify-content: center; width: 38px; height: 21px; }
    .von { background: #1c4587; }
    .zoom { margin: 0 14px 0 5px; }
    .end { padding-right: 9px; }
    .task { display: flex; align-items: center; height: 48px; flex: none; color: #fff; background: linear-gradient(90deg, #2a2412 0, #2b2218 12%, #26211e 22%, #231f28 35%, #202028 62%, #231f22 75%, #2c211d 82%, #22221e 92%, #2a2918 100%); }
    .weather { margin: 0 291px 0 17px; }
    .search { display: flex; align-items: center; gap: 6px; width: 100px; height: 32px; margin: 0 3px 0 14px; padding-left: 23px; border-radius: 16px; background: #343136; border-top: 1px solid #433f44; }
    .app { display: flex; flex-direction: column; align-items: center; width: 40px; height: 40px; margin: 0 2px; padding-top: 8px; border-radius: 4px; }
    .app::after { content: ""; width: 0; height: 3px; margin-top: 4px; border-radius: 2px; background: #999; flex: none; }
    .over .ic { overflow: visible; }
    .dot::after { width: 6px; }
    .active { background: #35333b; box-shadow: inset 0 1px #45434a; }
    .active::after { width: 16px; background: #4cc2ff; }
    .tray { display: flex; align-items: center; flex: 1; }
    .chev { margin-left: 49px; }
    .cloud { margin: 0 14px 0 9px; }
    .two { display: flex; flex-direction: column; align-items: center; line-height: 16px; padding-top: 1px; }
    .right { align-items: flex-end; margin-left: 15px; }
    .net { display: flex; gap: 8px; margin-left: 20px; }
    .badge { width: 16px; height: 16px; margin-left: 8px; border-radius: 50%; background: #4cc2ff; color: #123; font-size: 11px; line-height: 16px; text-align: center; }
    .menu { position: absolute; left: 296px; top: 122px; }
  `;

  header() {
    return html`<header class="top">
      <svg class="decor" width="1366" height="49" viewBox="0 0 1366 49" fill="none" stroke="#e7e7e7">
        <path d="M930 25H933V29H930ZM968 25H986V29ZM998 25H1010V34Q1003 35 998 32ZM1018 25V33M1023 25V32M1028 25V30M1034 25V28" fill="#e7e7e7" stroke-width="1.500" />
        <circle cx="1131" cy="18" r="16" stroke-width="7" />
        <path d="M1174 18Q1190 55 1220 60M1225 42Q1272 44 1274 -4" stroke-width="13" />
        <path d="M1186 22L1214 50M1196 18L1228 50M1206 14L1240 48M1222 -2L1256 32M1234 -4L1262 24" stroke-width="3" />
        <path d="M1283 32L1318 -3M1289 35L1327 -3M1296 38L1337 -3M1310 34L1347 -3M1332 22L1357 -3" stroke-width="3" />
      </svg>
      <div class="title">
        <div class="quick">
          ${I.word}<span class="q1">${I.save}</span><span class="q2">${I.undo}</span><span class="q3">${arrow}</span>
          <span class="q4">${I.redo}</span><span class="q5 dim2">${I.sunG}</span><span class="q6 dim">${arrow}</span><span class="q7">${I.qat}</span>
        </div>
        <div class="red">${tx("Documento2 -  Word (Error de activación de productos)", 294)}</div>
        <div class="ctl">
          <span class="help">?</span>
          ${icon(13, 11, svg`<path d="M.5 .5H12.500V10.500H.5ZM.5 2.500H12.500" stroke="#666"/><path d="M6.500 9V5M4.500 6.500L6.500 4.500L8.500 6.500" stroke="#666"/>`)}
          ${icon(10, 10, svg`<path d="M0 7H9" stroke="#666" stroke-width="2"/>`)}
          ${icon(10, 10, svg`<path d="M2.500 3V.5H9.500V6.500H7M.5 3.500H7.500V9.500H.5ZM.5 4.500H7.500M2.500 1.500H9.500" stroke="#666"/>`)}
          ${icon(10, 10, svg`<path d="M1 1L9 9M9 1L1 9" stroke="#666" stroke-width="2"/>`)}
        </div>
      </div>
      <nav class="tabs">
        <div class="tab file">${tx("ARCHIVO", 51)}</div>
        <div class="tab first">${tx("INICIO", 35)}</div>
        <div class="tab on">${tx("INSERTAR", 50)}</div>
        <div class="tab">${tx("DISEÑO", 41)}</div>
        <div class="tab">${tx("DISEÑO DE PÁGINA", 103)}</div>
        <div class="tab">${tx("REFERENCIAS", 72)}</div>
        <div class="tab">${tx("CORRESPONDENCIA", 110)}</div>
        <div class="tab">${tx("REVISAR", 44)}</div>
        <div class="tab">${tx("VISTA", 29)}</div>
        <div class="acct">${tx("Cuenta Microsoft", 92)}${arrow}${icon(24, 24, svg`<path d="M0 0H24V24H0Z" fill="#b1b1b1"/><ellipse cx="12" cy="9" rx="5" ry="6" fill="#fff"/><path d="M3 24Q3 16 9 15H15Q21 16 21 24Z" fill="#fff"/>`)}</div>
      </nav>
    </header>`;
  }

  ribbon() {
    return html`<div class="ribbon">
      ${group("pg", html`<div>${item(I.cover, "Portada", 41, true)}${item(I.blank, "Página en blanco", 91)}${item(I.brk, "Salto de página", 81)}</div>`, "Páginas", 39)}
      ${group("tb", big("", I.table, tx("Tabla", 27), arrow), "Tablas", 31)}
      ${group("il", html`
        ${big("b1", I.img, tx("Imágenes", 51), nothing)}
        ${big("b2", I.imgw, tx("Imágenes", 51), tx("en línea", 41))}
        ${big("b3", I.shapes, tx("Formas", 39), arrow)}
        <div class="col">${item(I.smart, "SmartArt", 47)}${item(I.chart, "Gráfico", 38)}${item(I.shot, "Captura", 42, true)}</div>`, "Ilustraciones", 65)}
      ${group("ap", big("", I.apps, tx("Aplicaciones", 67), html`${tx("para Office", 58)}${arrow}`), "Aplicaciones", 65)}
      ${group("mm", big("", I.video, tx("Vídeo", 30), tx("en línea", 41)), "Multimedia", 56)}
      ${group("vi", html`<div>${item(I.link, "Hipervínculo", 68)}${item(I.flag, "Marcador", 51)}${item(I.xref, "Referencia cruzada", 99)}</div>`, "Vínculos", 44)}
      ${group("co", big("", I.comment, tx("Comentario", 63), nothing), "Comentarios", 65)}
      ${group("en", html`<div>${item(I.hdr, "Encabezado", 63, true)}${item(I.ftr, "Pie de página", 71, true)}${item(I.num, "Número de página", 99, true)}</div>`, "Encabezado y pie de página", 144)}
      ${group("te", html`
        ${big("", I.tbox, tx("Cuadro de", 55), html`${tx("texto", 27)}${arrow}`)}
        <div class="tc">${[I.quick, I.wart, I.drop].map((x) => html`<div class="item"><span class="slot">${x}</span>${arrow}</div>`)}</div>
        <div class="tc wide"><div class="item"><span class="slot">${I.sign}</span>${arrow}</div><div class="item"><span class="slot">${I.date}</span></div><div class="item"><span class="slot">${I.obj}</span>${arrow}</div></div>`, "Texto", 27)}
      ${group("sy", html`<div><div class="eq">${item(GLYPH.pi, "Ecuación", 48, true)}</div>${item(GLYPH.omega, "Símbolo", 44, true)}</div>`, "Símbolos", 46)}
      <span class="fold">${icon(9, 6, svg`<path d="M.5 5L4.500 1L8.500 5" stroke="#666" stroke-width="2"/>`)}</span>
    </div>`;
  }

  statusBar() {
    return html`<footer class="status">
      ${tx("PÁGINA 1 DE 1", 73)}<span class="s1">${tx("37 PALABRAS", 65)}</span>
      <span class="s2">${icon(14, 13, svg`<path d="M6.500 2.500V12M6.500 2.500Q3 .5 .5 1.500V10.500Q4 10 6.500 12Q9 10 12.500 10.500V8M6.500 2.500Q8 .5 10 1" stroke="#fff"/><path d="M8 5.500L10 7.500L13.500 3" stroke="#fff" stroke-width="1.500"/>`)}</span>
      ${tx("ESPAÑOL (HONDURAS)", 112)}
      <div class="views">
        <span class="v">${icon(14, 13, svg`<path d="M7 2V12M7 2L.5 .5V10.500L7 12L13.500 10.500V.5ZM2 3.500H5.500M2 5.500H5.500M2 7.500H5.500M8.500 3.500H12M8.500 5.500H12M8.500 7.500H12" stroke="#fff"/>`)}</span>
        <span class="v von">${icon(14, 13, svg`<path d="M.5 .5H13.500V12.500H.5ZM2 2.500H12M2 4.500H12M2 6.500H12M2 8.500H12M2 10.500H12" stroke="#fff"/>`)}</span>
        <span class="v">${icon(15, 13, svg`<path d="M6 11.500H.5V.5H11.500V4M2 3.500H10M2 5.500H7M2 7.500H6" stroke="#fff"/><circle cx="10" cy="9" r="3.800" fill="#b9c9e0" stroke="#fff"/>`)}</span>
        <span class="zoom">${icon(124, 12, svg`<path d="M1 6H7M115 6H123M119 2V10" stroke="#fff" stroke-width="2"/><path d="M11 6.500H111M61.500 4V9" stroke="#fff"/><path d="M30 1H34V12H30Z" fill="#fff"/>`)}</span>
        <span class="end">${tx("44%", 21)}</span>
      </div>
    </footer>`;
  }

  taskBar() {
    return html`<footer class="task">
      <span class="weather">${icon(24, 24, svg`<circle cx="11.500" cy="11" r="10.500" fill="#8b98a6"/><path d="M13 19Q9.500 19 10 16Q10.500 13.500 13 13.500Q15 10 18.500 12Q20 13 20 14Q23 14 23 16.500T20 19Z" fill="#eef1f4"/>`)}</span>
      ${tb(svg`<path d="M0 1H11.500V12H0ZM12.500 1H24V12H12.500ZM0 13H11.500V24H0ZM12.500 13H24V24H12.500Z" fill="#41c1fb"/><path d="M0 1H11.500V12H0Z" fill="#70e0fb"/><path d="M12.500 13H24V24H12.500Z" fill="#189ff8"/>`)}
      <div class="search">${icon(14, 14, svg`<circle cx="8.500" cy="5.500" r="4.700" stroke="#fff" stroke-width="1.500"/><path d="M5 9L.8 13.200" stroke="#fff" stroke-width="1.800"/>`)}${tx("Buscar", 36, 12, 500)}</div>
      ${APPS.map(([ic, c]) => html`<div class="app ${c}">${ic}</div>`)}
      <div class="tray">
        <span class="chev">${icon(13, 8, svg`<path d="M.8 7L6.500 1.300L12.200 7" stroke="#fff" stroke-width="1.300"/>`)}</span>
        <span class="cloud">${icon(17, 14, svg`<path d="M3 10Q0 9 .5 6Q2 3.500 4 4Q7 -.5 11 1.500Q13 3 13 5V10Z" fill="#c9c9c9"/><circle cx="11.500" cy="8.500" r="5" fill="#1b7fd0"/><path d="M9 8Q11 5 14 7.500M14 9.500Q12 12 9 9.500" stroke="#fff"/>`)}</span>
        <div class="two">${tx("ESP", 20)}${tx("LAA", 21)}</div>
        <div class="net">
          ${icon(16, 14, svg`<path d="M1 5Q8 -2 15 5M3.200 7.500Q8 3 12.800 7.500M5.500 10Q8 7.500 10.500 10" stroke="#fff" stroke-width="1.400"/><circle cx="8" cy="12" r="1.300" fill="#fff"/>`)}
          ${icon(16, 14, svg`<path d="M.7 5H3L6.500 1.500V12.500L3 9H.7Z" stroke="#fff"/><path d="M8.500 5Q10 7 8.500 9" stroke="#fff"/><path d="M10.500 3Q13 7 10.500 11M12.500 1.500Q16.500 7 12.500 12.500" stroke="#888"/>`)}
          ${icon(16, 14, svg`<rect x=".7" y="3.200" width="13" height="8" rx="1.500" stroke="#fff" stroke-width="1.200"/><path d="M2.500 5H7V9.500H2.500ZM14 5.500H16V9H14Z" fill="#fff"/>`)}
        </div>
        <div class="two right">${tx("08:07", 28)}${tx("25/4/2023", 55)}</div>
        <div class="badge">4</div>
      </div>
    </footer>`;
  }

  render() {
    return html`
      ${this.header()} ${this.ribbon()}
      <main class="canvas"><article class="page">
        ${DOC.map(([h, lines]) => html`<div class="blk"><div class="h">${h}</div>${lines.map((l) => html`<div>${l}</div>`)}</div>`)}
      </article></main>
      ${this.statusBar()} ${this.taskBar()}
      <shapes-menu class="menu"></shapes-menu>`;
  }
}
